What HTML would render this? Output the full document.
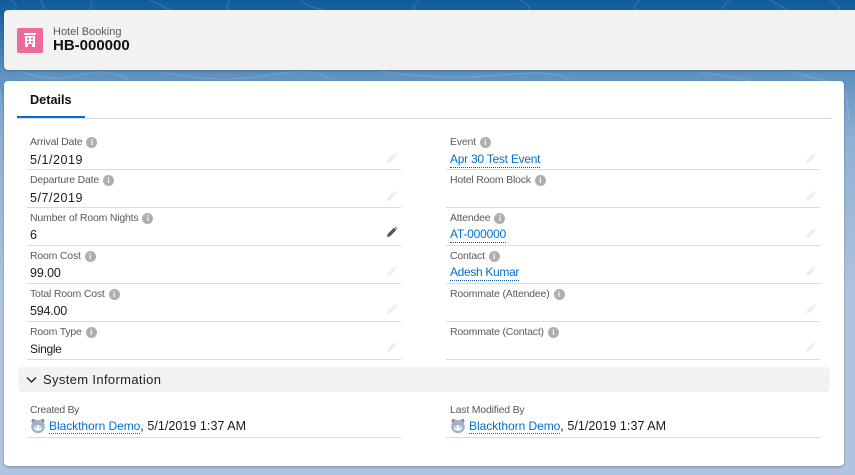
<!DOCTYPE html>
<html><head><meta charset="utf-8"><style>
html,body{margin:0;padding:0}
body{width:855px;height:475px;overflow:hidden;position:relative;font-family:"Liberation Sans",sans-serif;background:linear-gradient(180deg,#115a9b 0,#1b639f 12px,#5f92c2 75px,#8fb0d4 140px,#b0c4df 300px,#b0c4df 475px)}
.a{position:absolute;white-space:nowrap}
.l{font-size:10.5px;color:#5a5a5a;line-height:14px;letter-spacing:-.2px}
.v{font-size:12.5px;color:#1a1a1a;line-height:16px}
.k{color:#0070d2;border-bottom:1px dotted #0b5cab;line-height:14px;display:inline-block;font-size:12px}
.u{position:relative;top:-1px;padding-bottom:1px}
.i{display:inline-block;width:11px;height:11px;border-radius:50%;background:#b0adab;color:#fff;font-size:8px;font-weight:bold;line-height:11px;text-align:center;margin-left:4px;vertical-align:0;letter-spacing:0}
.d{position:absolute;height:1px;background:#dddbda;width:374px}
.p{position:absolute;width:12px;height:12px}
</style></head><body>
<svg class="a" style="left:0;top:0" width="855" height="120" fill="none" stroke="#fff" stroke-opacity=".16"><path d="M10 0q10 6 4 10M40 0q6 6 2 10M90 0q4 6 0 10M150 0q10 5 20 10M230 0q-6 6 0 10M300 0q10 8 24 10M420 0q-10 6-4 10M520 0q12 6 8 10M640 0q-8 5-4 10M730 0q-8 5-8 10M770 0q10 5 16 10M830 0q8 5 10 10"/><path d="M20 71q30 12 60 4t50 6M160 72q60 12 110 3t60 6M380 71q60 10 120 4t70 6M700 72q40 6 50 9M790 71q30 10 40 10"/><path d="M845 90q8 40 2 80M850 120q3 60-2 120"/><path d="M0 90q3 30 2 60"/></svg>
<div class="a" style="left:4px;top:10px;width:851px;height:60px;background:#f3f2f2;border-radius:4px 0 0 4px;box-shadow:0 1px 2px rgba(0,0,0,.25)"></div>
<div class="a" style="left:17px;top:28px;width:26px;height:25px;background:#ee6a9b;border-radius:2px"></div>
<svg class="a" style="left:17px;top:28px" width="26" height="25"><rect x="7" y="5" width="12" height="2" fill="#fff"/><path d="M8 8h10v11h-3v-3h-4v3H8z" fill="#fff"/><path d="M10 9.500h2v2h-2zM14 9.500h2v2h-2zM10 13h2v2h-2zM14 13h2v2h-2z" fill="#ee6a9b"/></svg>
<div class="a" style="left:53px;top:25px;font-size:11px;line-height:14px;color:#5a5a5a">Hotel Booking</div>
<div class="a" style="left:53px;top:37px;font-size:15px;line-height:18px;font-weight:bold;color:#111">HB-000000</div>

<div class="a" style="left:4px;top:81px;width:840px;height:385px;background:#fff;border-radius:4px;box-shadow:0 1px 2px rgba(0,0,0,.3)"></div>
<div class="a" style="left:30px;top:92px;font-size:12.700px;line-height:16px;font-weight:bold;color:#111">Details</div>
<div class="d" style="left:17px;top:118px;width:814px"></div>
<div class="a" style="left:17px;top:116px;width:68px;height:2px;background:#0070d2"></div>

<div class="a l" style="left:30px;top:135px">Arrival Date<span class="i">i</span></div>
<div class="a v" style="left:30px;top:152px;letter-spacing:.55px">5/1/2019</div><div class="d" style="left:27px;top:169px"></div>
<div class="a l" style="left:30px;top:173px">Departure Date<span class="i">i</span></div>
<div class="a v" style="left:30px;top:190px;letter-spacing:.55px">5/7/2019</div><div class="d" style="left:27px;top:207px"></div>
<div class="a l" style="left:30px;top:211px">Number of Room Nights<span class="i">i</span></div>
<div class="a v" style="left:30px;top:227px">6</div><div class="d" style="left:27px;top:245px"></div>
<div class="a l" style="left:30px;top:249px">Room Cost<span class="i">i</span></div>
<div class="a v" style="left:30px;top:265px;letter-spacing:-.1px">99.00</div><div class="d" style="left:27px;top:283px"></div>
<div class="a l" style="left:30px;top:287px">Total Room Cost<span class="i">i</span></div>
<div class="a v" style="left:30px;top:303px;letter-spacing:-.2px">594.00</div><div class="d" style="left:27px;top:321px"></div>
<div class="a l" style="left:30px;top:325px">Room Type<span class="i">i</span></div>
<div class="a v" style="left:30px;top:341px;font-size:12px;letter-spacing:-.3px">Single</div><div class="d" style="left:27px;top:359px"></div>

<div class="a l" style="left:450px;top:135px">Event<span class="i">i</span></div>
<div class="a v" style="left:450px;top:152px"><span class="k u" style="letter-spacing:-.25px">Apr 30 Test Event</span></div><div class="d" style="left:446px;top:169px"></div>
<div class="a l" style="left:450px;top:173px">Hotel Room Block<span class="i">i</span></div>
<div class="d" style="left:446px;top:207px"></div>
<div class="a l" style="left:450px;top:211px">Attendee<span class="i">i</span></div>
<div class="a v" style="left:450px;top:227px"><span class="k u" style="letter-spacing:-.2px">AT-000000</span></div><div class="d" style="left:446px;top:245px"></div>
<div class="a l" style="left:450px;top:249px">Contact<span class="i">i</span></div>
<div class="a v" style="left:450px;top:265px"><span class="k u" style="letter-spacing:-.33px">Adesh Kumar</span></div><div class="d" style="left:446px;top:283px"></div>
<div class="a l" style="left:450px;top:287px">Roommate (Attendee)<span class="i">i</span></div>
<div class="d" style="left:446px;top:321px"></div>
<div class="a l" style="left:450px;top:325px">Roommate (Contact)<span class="i">i</span></div>
<div class="d" style="left:446px;top:359px"></div>

<svg class="p" style="left:386px;top:152px" viewBox="0 0 12 12"><path d="M1 11l.6-3L8 1.600l2.400 2.400L4 10.400zM8.800 1l.7-.5 2 2-.5.700z" fill="#eeeeee"/></svg>
<svg class="p" style="left:386px;top:190px" viewBox="0 0 12 12"><path d="M1 11l.6-3L8 1.600l2.400 2.400L4 10.400zM8.800 1l.7-.5 2 2-.5.700z" fill="#eeeeee"/></svg>
<svg class="p" style="left:386px;top:226px" viewBox="0 0 12 12"><path d="M1 11l.6-3L8 1.600l2.400 2.400L4 10.400zM8.800 1l.7-.5 2 2-.5.700z" fill="#555"/></svg>
<svg class="p" style="left:386px;top:265px" viewBox="0 0 12 12"><path d="M1 11l.6-3L8 1.600l2.400 2.400L4 10.400zM8.800 1l.7-.5 2 2-.5.700z" fill="#eeeeee"/></svg>
<svg class="p" style="left:386px;top:303px" viewBox="0 0 12 12"><path d="M1 11l.6-3L8 1.600l2.400 2.400L4 10.400zM8.800 1l.7-.5 2 2-.5.700z" fill="#eeeeee"/></svg>
<svg class="p" style="left:386px;top:341px" viewBox="0 0 12 12"><path d="M1 11l.6-3L8 1.600l2.400 2.400L4 10.400zM8.800 1l.7-.5 2 2-.5.700z" fill="#eeeeee"/></svg>
<svg class="p" style="left:805px;top:152px" viewBox="0 0 12 12"><path d="M1 11l.6-3L8 1.600l2.400 2.400L4 10.400zM8.800 1l.7-.5 2 2-.5.700z" fill="#eeeeee"/></svg>
<svg class="p" style="left:805px;top:190px" viewBox="0 0 12 12"><path d="M1 11l.6-3L8 1.600l2.400 2.400L4 10.400zM8.800 1l.7-.5 2 2-.5.700z" fill="#eeeeee"/></svg>
<svg class="p" style="left:805px;top:227px" viewBox="0 0 12 12"><path d="M1 11l.6-3L8 1.600l2.400 2.400L4 10.400zM8.800 1l.7-.5 2 2-.5.700z" fill="#eeeeee"/></svg>
<svg class="p" style="left:805px;top:265px" viewBox="0 0 12 12"><path d="M1 11l.6-3L8 1.600l2.400 2.400L4 10.400zM8.800 1l.7-.5 2 2-.5.700z" fill="#eeeeee"/></svg>
<svg class="p" style="left:805px;top:303px" viewBox="0 0 12 12"><path d="M1 11l.6-3L8 1.600l2.400 2.400L4 10.400zM8.800 1l.7-.5 2 2-.5.700z" fill="#eeeeee"/></svg>
<svg class="p" style="left:805px;top:341px" viewBox="0 0 12 12"><path d="M1 11l.6-3L8 1.600l2.400 2.400L4 10.400zM8.800 1l.7-.5 2 2-.5.700z" fill="#eeeeee"/></svg>

<div class="a" style="left:18px;top:367px;width:812px;height:25px;background:#f3f2f2;border-radius:4px"></div>
<svg class="a" style="left:26px;top:375px" width="11" height="10"><path d="M1 2.500l4.500 4.500L10 2.500" fill="none" stroke="#222" stroke-width="1.400"/></svg>
<div class="a" style="left:43px;top:371px;font-size:13px;line-height:17px;color:#222;letter-spacing:.35px">System Information</div>

<div class="a l" style="left:30px;top:403px;letter-spacing:-.35px">Created By</div>
<svg class="a" style="left:30px;top:418px" width="16" height="16"><circle cx="3.500" cy="3" r="2" fill="#7f90a8"/><circle cx="12.500" cy="3" r="2" fill="#7f90a8"/><circle cx="8" cy="8.500" r="6.800" fill="#a3b2c6"/><ellipse cx="8" cy="10" rx="4" ry="2.600" fill="#fff"/><circle cx="6" cy="9.500" r=".7" fill="#66788f"/><circle cx="10" cy="9.500" r=".7" fill="#66788f"/></svg>
<div class="a v" style="left:49px;top:418px"><span class="k" style="letter-spacing:-.05px">Blackthorn Demo</span><span style="letter-spacing:.05px">, 5/1/2019 1:37 AM</span></div>
<div class="d" style="left:27px;top:437px"></div>
<div class="a l" style="left:450px;top:403px">Last Modified By</div>
<svg class="a" style="left:450px;top:418px" width="16" height="16"><circle cx="3.500" cy="3" r="2" fill="#7f90a8"/><circle cx="12.500" cy="3" r="2" fill="#7f90a8"/><circle cx="8" cy="8.500" r="6.800" fill="#a3b2c6"/><ellipse cx="8" cy="10" rx="4" ry="2.600" fill="#fff"/><circle cx="6" cy="9.500" r=".7" fill="#66788f"/><circle cx="10" cy="9.500" r=".7" fill="#66788f"/></svg>
<div class="a v" style="left:469px;top:418px"><span class="k" style="letter-spacing:-.05px">Blackthorn Demo</span><span style="letter-spacing:.05px">, 5/1/2019 1:37 AM</span></div>
<div class="d" style="left:446px;top:437px"></div>
</body></html>
